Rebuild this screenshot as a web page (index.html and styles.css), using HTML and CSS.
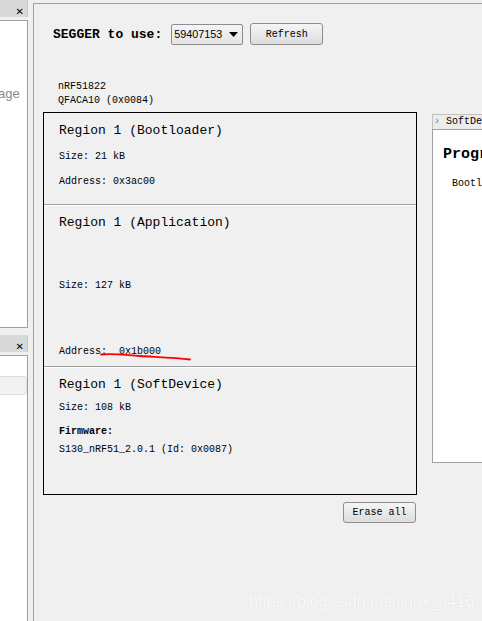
FILE: index.html
```
<!DOCTYPE html>
<html lang="en">
<head>
    <meta charset="utf-8">
    <title>nRF Connect - Programmer</title>
    <link rel="stylesheet" href="styles.css">
</head>
<body>
    <div class="app">
        <div class="sidebar">
            <div class="dock-head"><span class="dock-close">&#x2715;</span></div>
            <div class="dock-body dock-top">
                <span class="dock-text">age</span>
            </div>
            <div class="dock-head dock-head-2"><span class="dock-close">&#x2715;</span></div>
            <div class="dock-body dock-bottom">
                <div class="dock-row"></div>
            </div>
        </div>
        <div class="splitter"></div>
        <div class="main">
            <div class="toolbar">
                <span class="toolbar-label">SEGGER to use:</span>
                <div class="select">
                    <span>59407153</span>
                    <svg class="select-arrow" width="9" height="5" viewBox="0 0 9 5"><path d="M0 0h9L4.5 5z" fill="#000"/></svg>
                </div>
                <button class="btn btn-refresh">Refresh</button>
            </div>
            <div class="chip-info">
                <div>nRF51822</div>
                <div>QFACA10 (0x0084)</div>
            </div>
            <div class="content">
                <div class="memory-col">
                    <div class="memory-box">
                        <div class="region region-boot">
                            <div class="region-title">Region 1 (Bootloader)</div>
                            <div class="region-line gap-11">Size: 21 kB</div>
                            <div class="region-line gap-11">Address: 0x3ac00</div>
                        </div>
                        <div class="region-sep"></div>
                        <div class="region region-app">
                            <div class="region-title">Region 1 (Application)</div>
                            <div class="region-line gap-48">Size: 127 kB</div>
                            <div class="region-line gap-52">Address:&nbsp;&nbsp;0x1b000</div>
                        </div>
                        <div class="region-sep"></div>
                        <div class="region region-sd">
                            <div class="region-title">Region 1 (SoftDevice)</div>
                            <div class="region-line gap-8">Size: 108 kB</div>
                            <div class="region-line gap-10 bold">Firmware:</div>
                            <div class="region-line gap-4">S130_nRF51_2.0.1 (Id: 0x0087)</div>
                        </div>
                    </div>
                    <div class="actions">
                        <button class="btn btn-erase">Erase all</button>
                    </div>
                </div>
                <div class="side-panel">
                    <div class="side-tab"><span class="tab-mark">&#x203A;</span> SoftDev</div>
                    <div class="side-body">
                        <div class="side-title">Progr</div>
                        <div class="side-text">Bootl</div>
                    </div>
                </div>
            </div>
        </div>
    </div>
    <svg class="scribble" width="482" height="621" viewBox="0 0 482 621">
        <path d="M101 354.5 C112 353 125 355 140 356 S175 357.5 190 359.5" fill="none" stroke="#ff0000" stroke-width="1.8" stroke-linecap="round"/>
    </svg>
    <div class="watermark">https://blog.csdn.net/linux_0416</div>
</body>
</html>
```
FILE: styles.css
```
html, body {
    margin: 0;
    padding: 0;
}
body {
    width: 482px;
    height: 621px;
    overflow: hidden;
    background-color: #f0f0f0;
    font-family: "Liberation Mono", "DejaVu Sans Mono", monospace;
    color: #000;
    position: relative;
}
.app {
    display: flex;
    height: 621px;
}

/* left dock */
.sidebar {
    width: 28px;
    flex: none;
    display: flex;
    flex-direction: column;
}
.dock-head {
    height: 17px;
    background-color: #d9d9d9;
    border-right: 1px solid #c8c8c8;
    display: flex;
    justify-content: flex-end;
    align-items: center;
    padding-right: 3px;
    box-sizing: border-box;
}
.dock-close {
    font-family: "DejaVu Sans", sans-serif;
    font-size: 10px;
    font-weight: bold;
    line-height: 10px;
    margin-top: 6px;
}
.dock-body {
    background-color: #fff;
    border-right: 1px solid #a0a0a0;
    border-top: 1px solid #a0a0a0;
    box-sizing: border-box;
}
.dock-top {
    height: 308px;
    margin-top: 3px;
    border-bottom: 1px solid #a0a0a0;
    padding-top: 64px;
}
.dock-text {
    font-family: "Liberation Sans", Arial, sans-serif;
    font-size: 13px;
    color: #8a8a8a;
    margin-left: -2px;
}
.dock-head-2 {
    margin-top: 7px;
}
.dock-bottom {
    flex: 1;
    margin-top: 3px;
    padding-top: 20px;
}
.dock-row {
    height: 17px;
    background-color: #f2f2f2;
    border: 1px solid #dedede;
    border-left: none;
    border-radius: 0 3px 3px 0;
}

.splitter {
    width: 5px;
    flex: none;
    border-right: 1px solid #a0a0a0;
    margin-top: 3px;
}

/* main area */
.main {
    flex: 1;
    overflow: hidden;
    border-top: 1px solid #a0a0a0;
    margin-top: 3px;
    display: flex;
    flex-direction: column;
}
.toolbar {
    display: flex;
    align-items: center;
    padding: 19px 0 0 19px;
    height: 22px;
}
.toolbar-label {
    font-weight: bold;
    font-size: 13px;
    margin-right: 9px;
}
.select {
    width: 64px;
    height: 19px;
    border: 1px solid #8d8d8d;
    border-radius: 2px;
    background: linear-gradient(#f5f5f5, #e4e4e4);
    display: flex;
    align-items: center;
    justify-content: space-between;
    padding: 0 4px 0 2px;
    font-family: "Liberation Sans", Arial, sans-serif;
    font-size: 10.8px;
    margin-right: 7px;
}
.btn {
    font-family: "Liberation Mono", monospace;
    font-size: 10px;
    color: #000;
    background: linear-gradient(#f6f6f6, #dcdcdc);
    border: 1px solid #8d8d8d;
    border-radius: 3px;
    padding: 0;
    cursor: pointer;
}
.btn-refresh {
    width: 73px;
    height: 22px;
}
.chip-info {
    font-size: 10px;
    line-height: 14px;
    margin: 35px 0 0 24px;
}

.content {
    display: flex;
    margin-top: 4px;
}
.memory-col {
    margin-left: 9px;
    width: 374px;
    flex: none;
}
.memory-box {
    border: 1px solid #000;
    height: 381px;
}
.region {
    padding-left: 15px;
    box-sizing: border-box;
}
.region-boot {
    height: 91px;
    padding-top: 10px;
}
.region-app {
    height: 160px;
    padding-top: 9px;
}
.region-sd {
    height: 126px;
    padding-top: 9px;
}
.region-sep {
    height: 1px;
    background-color: #a0a0a0;
    border-bottom: 1px solid #fff;
}
.region-title {
    font-size: 13px;
    line-height: 16px;
}
.region-line {
    font-size: 10px;
    line-height: 14px;
}
.bold {
    font-weight: bold;
}
.gap-4 { margin-top: 4px; }
.gap-8 { margin-top: 8px; }
.gap-10 { margin-top: 10px; }
.gap-11 { margin-top: 11px; }
.gap-48 { margin-top: 48px; }
.gap-52 { margin-top: 52px; }

.actions {
    display: flex;
    justify-content: flex-end;
    margin-top: 7px;
    padding-right: 1px;
}
.btn-erase {
    width: 73px;
    height: 21px;
}

/* right panel, cut by the window edge */
.side-panel {
    margin: 2px 0 0 15px;
    flex: none;
    width: 120px;
}
.side-tab {
    height: 14px;
    font-size: 10px;
    line-height: 14px;
    background-color: #ececec;
    border: 1px solid #c0c0c0;
    border-bottom: none;
    padding-left: 1px;
    white-space: nowrap;
}
.tab-mark {
    color: #777;
}
.side-body {
    background-color: #fff;
    border: 1px solid #a0a0a0;
    height: 334px;
    padding: 16px 0 0 10px;
    box-sizing: border-box;
}
.side-title {
    font-size: 15px;
    font-weight: bold;
    line-height: 18px;
    white-space: nowrap;
}
.side-text {
    font-size: 10px;
    line-height: 14px;
    margin: 13px 0 0 9px;
    white-space: nowrap;
}

/* overlays */
.scribble {
    position: absolute;
    left: 0;
    top: 0;
    pointer-events: none;
}
.watermark {
    position: absolute;
    left: 249px;
    top: 593px;
    font-family: "Liberation Sans", Arial, sans-serif;
    font-size: 16px;
    color: #fbfbfb;
    text-shadow: 0 0 1px #d8d8d8;
    white-space: nowrap;
}
```
